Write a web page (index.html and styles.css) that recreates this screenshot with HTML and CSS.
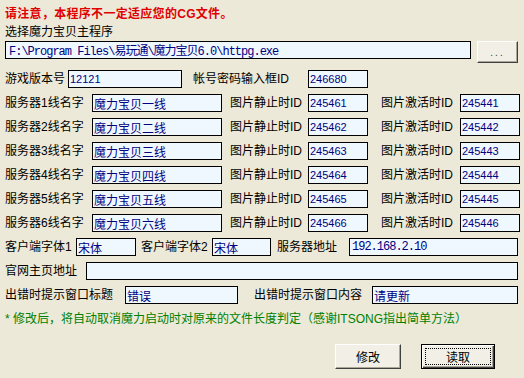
FILE: index.html
```html
<!DOCTYPE html>
<html lang="zh-CN">
<head>
    <meta charset="UTF-8">
    <title>魔力宝贝设置</title>
    <link rel="stylesheet" href="styles.css">
</head>
<body>
    <div class="dialog">
        <div class="warning">请注意，本程序不一定适应您的CG文件。</div>
        <div class="caption">选择魔力宝贝主程序</div>

        <div class="row path-row">
            <input type="text" class="field path" value="F:\Program Files\易玩通\魔力宝贝6.0\httpg.exe">
            <button class="btn browse">...</button>
        </div>

        <div class="row ver-row">
            <label class="lbl w63">游戏版本号</label>
            <input type="text" class="field num w114" value="12121">
            <label class="lbl ml11 w115">帐号密码输入框ID</label>
            <input type="text" class="field num w60" value="246680">
        </div>

        <div class="row srv-row">
            <label class="lbl w87">服务器1线名字</label>
            <input type="text" class="field w130" value="魔力宝贝一线">
            <label class="lbl ml8 w78">图片静止时ID</label>
            <input type="text" class="field num w60" value="245461">
            <label class="lbl ml13 w79">图片激活时ID</label>
            <input type="text" class="field num w60" value="245441">
        </div>
        <div class="row srv-row">
            <label class="lbl w87">服务器2线名字</label>
            <input type="text" class="field w130" value="魔力宝贝二线">
            <label class="lbl ml8 w78">图片静止时ID</label>
            <input type="text" class="field num w60" value="245462">
            <label class="lbl ml13 w79">图片激活时ID</label>
            <input type="text" class="field num w60" value="245442">
        </div>
        <div class="row srv-row">
            <label class="lbl w87">服务器3线名字</label>
            <input type="text" class="field w130" value="魔力宝贝三线">
            <label class="lbl ml8 w78">图片静止时ID</label>
            <input type="text" class="field num w60" value="245463">
            <label class="lbl ml13 w79">图片激活时ID</label>
            <input type="text" class="field num w60" value="245443">
        </div>
        <div class="row srv-row">
            <label class="lbl w87">服务器4线名字</label>
            <input type="text" class="field w130" value="魔力宝贝四线">
            <label class="lbl ml8 w78">图片静止时ID</label>
            <input type="text" class="field num w60" value="245464">
            <label class="lbl ml13 w79">图片激活时ID</label>
            <input type="text" class="field num w60" value="245444">
        </div>
        <div class="row srv-row">
            <label class="lbl w87">服务器5线名字</label>
            <input type="text" class="field w130" value="魔力宝贝五线">
            <label class="lbl ml8 w78">图片静止时ID</label>
            <input type="text" class="field num w60" value="245465">
            <label class="lbl ml13 w79">图片激活时ID</label>
            <input type="text" class="field num w60" value="245445">
        </div>
        <div class="row srv-row">
            <label class="lbl w87">服务器6线名字</label>
            <input type="text" class="field w130" value="魔力宝贝六线">
            <label class="lbl ml8 w78">图片静止时ID</label>
            <input type="text" class="field num w60" value="245466">
            <label class="lbl ml13 w79">图片激活时ID</label>
            <input type="text" class="field num w60" value="245446">
        </div>

        <div class="row">
            <label class="lbl w71">客户端字体1</label>
            <input type="text" class="field w60" value="宋体">
            <label class="lbl ml5 w71">客户端字体2</label>
            <input type="text" class="field w59" value="宋体">
            <label class="lbl ml6 w72">服务器地址</label>
            <input type="text" class="field mono w169" value="192.168.2.10">
        </div>

        <div class="row home-row">
            <label class="lbl">官网主页地址</label>
            <input type="text" class="field home" value="">
        </div>

        <div class="row">
            <label class="lbl w120">出错时提示窗口标题</label>
            <input type="text" class="field w113" value="错误">
            <label class="lbl ml16 w118">出错时提示窗口内容</label>
            <input type="text" class="field w146" value="请更新">
        </div>

        <div class="note">*&nbsp;修改后，将自动取消魔力启动时对原来的文件长度判定（感谢ITSONG指出简单方法）</div>

        <div class="actions">
            <button class="btn save">修改</button>
            <button class="btn load default"><span class="focus">读取</span></button>
        </div>
    </div>
</body>
</html>
```

FILE: styles.css
```css
body {
    margin: 0;
    width: 524px;
    height: 378px;
    background-color: #ece9d8;
    font-family: "Liberation Sans", "Noto Sans CJK SC", sans-serif;
    font-size: 12px;
    color: #000;
    overflow: hidden;
}
.dialog {
    padding: 6px 5px 0 5px;
}
.warning {
    line-height: 16px;
    height: 16px;
    color: #e00000;
    font-weight: bold;
    letter-spacing: 0.3px;
}
.caption {
    margin-top: 3px;
    line-height: 14px;
    height: 14px;
}
.row {
    display: flex;
    align-items: center;
    height: 18px;
    margin-top: 6px;
}
.path-row {
    align-items: flex-start;
    height: 22px;
    margin-top: 2px;
}
.ver-row {
    margin-top: 7px;
}
.lbl {
    display: block;
    line-height: 18px;
    white-space: nowrap;
    flex: none;
}
.field {
    box-sizing: border-box;
    height: 18px;
    margin: 0;
    padding: 0 2px 0 1px;
    border: 1px solid #000;
    background-color: #f0f8ff;
    color: #000080;
    font-family: "Liberation Sans", "Noto Sans CJK SC", sans-serif;
    font-size: 12px;
    flex: none;
    outline: none;
}
.field.num {
    font-size: 11px;
}
.field.mono {
    font-family: "Liberation Mono", "Noto Sans CJK SC", monospace;
    letter-spacing: -1px;
    padding-left: 2px;
}
.field.path {
    width: 466px;
    padding-left: 3px;
    font-family: "Liberation Mono", "Noto Sans CJK SC", monospace;
    letter-spacing: -1px;
}
.home-row .lbl {
    width: 81px;
}
.home-row .field.home {
    flex: 1;
    width: auto;
    min-width: 0;
    margin-right: 1px;
}

.w59 { width: 59px; }
.w60 { width: 60px; }
.w63 { width: 63px; }
.w71 { width: 71px; }
.w72 { width: 72px; }
.w78 { width: 78px; }
.w79 { width: 79px; }
.w87 { width: 87px; }
.w113 { width: 113px; }
.w114 { width: 114px; }
.w115 { width: 115px; }
.w118 { width: 118px; }
.w120 { width: 120px; }
.w130 { width: 130px; }
.w146 { width: 146px; }
.w169 { width: 169px; }
.ml5 { margin-left: 5px; }
.ml6 { margin-left: 6px; }
.ml8 { margin-left: 8px; }
.ml11 { margin-left: 11px; }
.ml13 { margin-left: 13px; }
.ml16 { margin-left: 16px; }

.note {
    margin-top: 7px;
    line-height: 16px;
    color: #008000;
    white-space: nowrap;
}

.btn {
    box-sizing: border-box;
    margin: 0;
    padding: 0;
    background-color: #f1efe6;
    border: 1px solid;
    border-color: #fff #404040 #404040 #fff;
    box-shadow: inset -1px -1px #aca899;
    font-family: "Liberation Sans", "Noto Sans CJK SC", sans-serif;
    font-size: 12px;
    color: #000;
    cursor: pointer;
}
.browse {
    width: 41px;
    height: 22px;
    margin-left: 6px;
    color: #444;
    letter-spacing: 2px;
    font-size: 10px;
}
.actions {
    display: flex;
    margin-top: 17px;
    padding-left: 330px;
}
.save {
    width: 66px;
    height: 25px;
}
.load {
    width: 74px;
    height: 25px;
    margin-left: 20px;
}
.default {
    border: 1px solid #000;
    box-shadow: inset 1px 1px #fff, inset -1px -1px #404040, inset -2px -2px #aca899;
    padding: 3px;
}
.default .focus {
    display: flex;
    align-items: center;
    justify-content: center;
    height: 100%;
    box-sizing: border-box;
    border: 1px dotted #000;
}
```
